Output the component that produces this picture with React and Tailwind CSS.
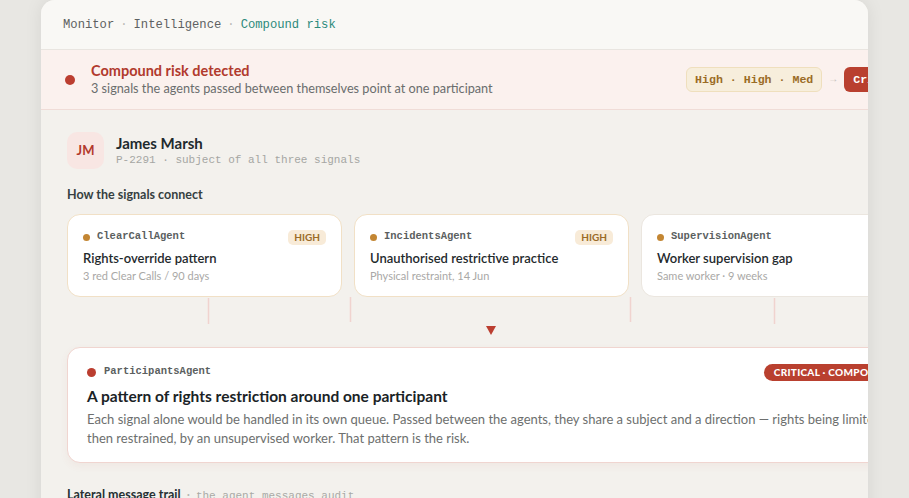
const sans = { fontFamily: 'Lato, "Noto Sans", sans-serif' };

function SignalCard({ agent, badge, title, sub, muted }) {
    return (
        <div className={`w-[275px] shrink-0 rounded-[13px] border bg-white px-[15px] pt-[14px] pb-[13px] ${muted ? 'border-[#ebe6df]' : 'border-[#f1e0c6]'}`}>
            <div className="flex h-[16px] items-center justify-between">
                <div className="flex items-center gap-[7px]">
                    <span className="h-[7px] w-[7px] rounded-full bg-[#c38633]" />
                    <span className="font-['Liberation_Mono',monospace] text-[10.5px] font-bold text-[#5b5f5f]">{agent}</span>
                </div>
                {badge && (
                    <span className="rounded-[5px] bg-[#f8ebd8] px-[6px] py-[1px] text-[10px] font-bold leading-[13px] text-[#9b6a27]">{badge}</span>
                )}
            </div>
            <div className="mt-[3px] text-[13px] font-semibold leading-[20px] text-[#1f2a2d]">{title}</div>
            <div className="text-[11px] leading-[15px] text-[#a9a8a6]">{sub}</div>
        </div>
    );
}

export default function App() {
    return (
        <div className="h-screen w-full overflow-hidden bg-[#e8e7e3] pl-[41px]" style={sans}>
            <div className="h-[520px] w-[827px] overflow-hidden rounded-t-[14px] bg-[#f3f1ed] shadow-[0_0_18px_rgba(0,0,0,0.08)]">
                <div className="w-[900px]">
                    <div className="flex h-[50px] items-center border-b border-[#e9e5e0] bg-[#f9f8f5] px-[22px] pt-[1px] font-['Liberation_Mono',monospace] text-[12.2px]">
                        <span className="text-[#5d6161]">Monitor</span>
                        <span className="px-[6px] text-[#b9b8b4]">·</span>
                        <span className="text-[#5d6161]">Intelligence</span>
                        <span className="px-[6px] text-[#b9b8b4]">·</span>
                        <span className="text-[#2c8a7b]">Compound risk</span>
                    </div>

                    <div className="flex h-[60px] items-center justify-between border-b border-[#f0dcd7] bg-[#fbf1ee] pl-[24px] pr-[23px]">
                        <div className="flex items-center gap-[16px]">
                            <span className="h-[10px] w-[10px] rounded-full bg-[#bb3e30]" />
                            <div>
                                <div className="text-[14.5px] font-bold leading-[18px] text-[#b13a2d]">Compound risk detected</div>
                                <div className="text-[12.7px] leading-[17px] text-[#6a6d6d]">3 signals the agents passed between themselves point at one participant</div>
                            </div>
                        </div>
                        <div className="flex items-center gap-[8px] font-['Liberation_Mono',monospace] text-[11.6px] font-bold">
                            <span className="rounded-[6px] border border-[#efdfbd] bg-[#f7eedc] px-[8px] py-[3px] text-[#9b6c26]">High · High · Med</span>
                            <span className="text-[10px] font-normal text-[#c4c0bb]">→</span>
                            <span className="rounded-[6px] bg-[#b9402f] px-[9px] py-[4px] text-white">Critical</span>
                        </div>
                    </div>

                    <div className="px-[26px] pt-[22px]">
                        <div className="flex items-center gap-[12px]">
                            <div className="flex h-[37px] w-[37px] items-center justify-center rounded-[10px] bg-[#f8e6e3] text-[13px] font-bold text-[#b3392d]">JM</div>
                            <div>
                                <div className="text-[15px] font-bold leading-[19px] text-[#1e2a2d]">James Marsh</div>
                                <div className="font-['Liberation_Mono',monospace] text-[11px] leading-[15px] text-[#a5a6a3]">P-2291 · subject of all three signals</div>
                            </div>
                        </div>

                        <div className="mt-[18px] text-[12.5px] font-bold leading-[16px] text-[#363f41]">How the signals connect</div>

                        <div className="mt-[11px] flex gap-[12px]">
                            <SignalCard agent="ClearCallAgent" badge="HIGH" title="Rights-override pattern" sub="3 red Clear Calls / 90 days" />
                            <SignalCard agent="IncidentsAgent" badge="HIGH" title="Unauthorised restrictive practice" sub="Physical restraint, 14 Jun" />
                            <SignalCard agent="SupervisionAgent" title="Worker supervision gap" sub="Same worker · 9 weeks" muted />
                        </div>

                        <svg width="848" height="50" className="block">
                            <line x1="141.5" y1="1" x2="141.5" y2="27" stroke="#f0d3cf" strokeWidth="1.5" />
                            <line x1="283.5" y1="0" x2="283.5" y2="25" stroke="#f0d3cf" strokeWidth="1.5" />
                            <line x1="563.5" y1="0" x2="563.5" y2="25" stroke="#f0d3cf" strokeWidth="1.5" />
                            <line x1="707.5" y1="1" x2="707.5" y2="27" stroke="#f0d3cf" strokeWidth="1.5" />
                            <polygon points="419,29 429,29 424,38" fill="#bb3e30" />
                        </svg>

                        <div className="w-[848px] rounded-[13px] border border-[#f0d5d0] bg-white pl-[19px] pr-[12px] pt-[15px] pb-[14px] shadow-[0_3px_8px_rgba(190,80,60,0.06)]">
                            <div className="flex h-[18px] items-center justify-between">
                                <div className="flex items-center gap-[8px]">
                                    <span className="h-[9px] w-[9px] rounded-full bg-[#bb3e30]" />
                                    <span className="font-['Liberation_Mono',monospace] text-[10.5px] font-bold text-[#5b5f5f]">ParticipantsAgent</span>
                                </div>
                                <span className="rounded-full bg-[#b9402f] px-[10px] py-[2px] text-[10px] font-black leading-[13px] tracking-[0.03em] text-white">CRITICAL · COMPOUND</span>
                            </div>
                            <div className="mt-[4px] text-[15.5px] font-bold leading-[22px] text-[#1a2326]">A pattern of rights restriction around one participant</div>
                            <div className="mt-[3px] pr-[7px] text-[13px] leading-[19px] text-[#6d6f6e]">Each signal alone would be handled in its own queue. Passed between the agents, they share a subject and a direction — rights being limited, then restrained, by an unsupervised worker. That pattern is the risk.</div>
                        </div>

                        <div className="mt-[24px] flex items-baseline gap-[6px] text-[12.5px] leading-[16px]">
                            <span className="font-bold text-[#263033]">Lateral message trail</span>
                            <span className="text-[#b7b6b2]">·</span>
                            <span className="font-['Liberation_Mono',monospace] text-[11px] text-[#a9aaa6]">the agent messages audit</span>
                        </div>
                    </div>
                </div>
            </div>
        </div>
    );
}
